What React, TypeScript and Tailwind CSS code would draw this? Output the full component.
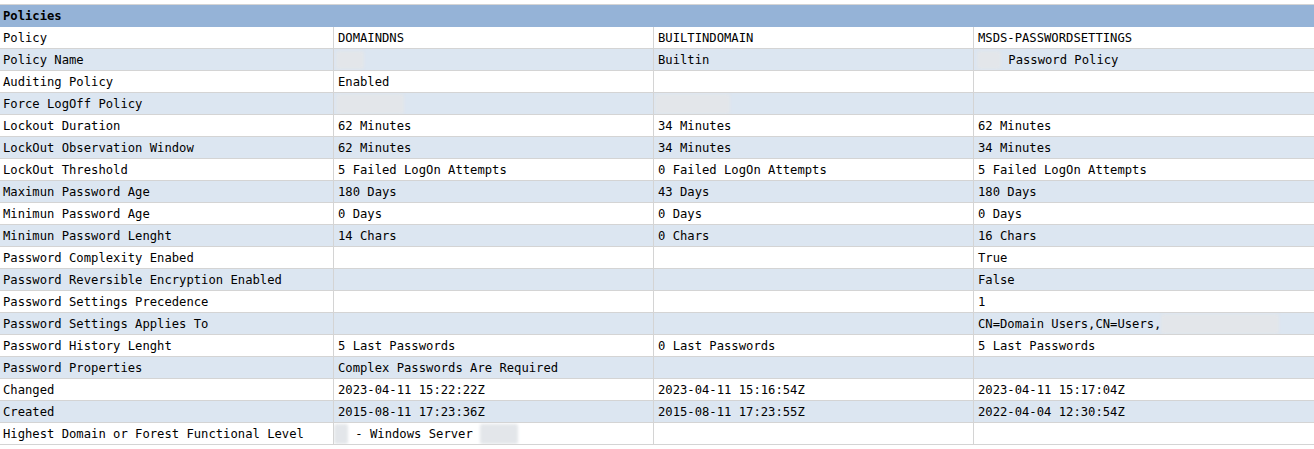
import React from "react";

type Cell = React.ReactNode;

const Blur = ({ w, h = 18, className = "" }: { w: number; h?: number; className?: string }) => (
  <span
    className={`inline-block align-middle bg-[#e3e6ea] blur-[1.5px] rounded-[2px] ${className}`}
    style={{ width: w, height: h }}
  />
);

const rows: Cell[][] = [
  ["Policy", "DOMAINDNS", "BUILTINDOMAIN", "MSDS-PASSWORDSETTINGS"],
  [
    "Policy Name",
    <span className="flex items-center -ml-[2px]"><Blur w={28} /></span>,
    "Builtin",
    <span className="flex items-center">
      <Blur w={24} className="-ml-[1px]" />
      <span className="whitespace-pre"> Password Policy</span>
    </span>,
  ],
  ["Auditing Policy", "Enabled", "", ""],
  [
    "Force LogOff Policy",
    <span className="flex items-center -ml-[2px]"><Blur w={68} h={20} /></span>,
    <span className="flex items-center -ml-[3px]"><Blur w={75} h={20} /></span>,
    "",
  ],
  ["Lockout Duration", "62 Minutes", "34 Minutes", "62 Minutes"],
  ["LockOut Observation Window", "62 Minutes", "34 Minutes", "34 Minutes"],
  ["LockOut Threshold", "5 Failed LogOn Attempts", "0 Failed LogOn Attempts", "5 Failed LogOn Attempts"],
  ["Maximun Password Age", "180 Days", "43 Days", "180 Days"],
  ["Minimun Password Age", "0 Days", "0 Days", "0 Days"],
  ["Minimun Password Lenght", "14 Chars", "0 Chars", "16 Chars"],
  ["Password Complexity Enabed", "", "", "True"],
  ["Password Reversible Encryption Enabled", "", "", "False"],
  ["Password Settings Precedence", "", "", "1"],
  [
    "Password Settings Applies To",
    "",
    "",
    <span className="flex items-center">
      <span>CN=Domain Users,CN=Users,</span>
      <Blur w={118} h={20} />
    </span>,
  ],
  ["Password History Lenght", "5 Last Passwords", "0 Last Passwords", "5 Last Passwords"],
  ["Password Properties", "Complex Passwords Are Required", "", ""],
  ["Changed", "2023-04-11 15:22:22Z", "2023-04-11 15:16:54Z", "2023-04-11 15:17:04Z"],
  ["Created", "2015-08-11 17:23:36Z", "2015-08-11 17:23:55Z", "2022-04-04 12:30:54Z"],
  [
    "Highest Domain or Forest Functional Level",
    <span className="flex items-center -ml-[4px]">
      <Blur w={14} h={20} />
      <span className="whitespace-pre"> - Windows Server </span>
      <Blur w={38} h={20} />
    </span>,
    "",
    "",
  ],
];

export default function App() {
  return (
    <div
      className="w-[1314px] h-[449px] bg-white pt-[4px] text-black text-[12.2px] leading-none"
      style={{ fontFamily: '"DejaVu Sans Mono", "Liberation Mono", monospace' }}
    >
      <div className="border-t border-[#d4d4d4] bg-[#95b3d7] h-[23px] flex items-center pl-[3px] font-bold">
        Policies
      </div>
      {rows.map((r, i) => (
        <div
          key={i}
          className={`grid grid-cols-[333px_320px_320px_1fr] h-[22px] border-b border-[#d4d4d4] ${
            i % 2 === 1 ? "bg-[#dce6f1]" : "bg-white"
          }`}
        >
          {r.map((c, j) => (
            <div
              key={j}
              className={`flex items-center whitespace-pre overflow-hidden pt-[1px] ${
                j === 0 ? "pl-[3px]" : "pl-[4px] border-l border-[#d4d4d4]"
              }`}
            >
              {c}
            </div>
          ))}
        </div>
      ))}
    </div>
  );
}
